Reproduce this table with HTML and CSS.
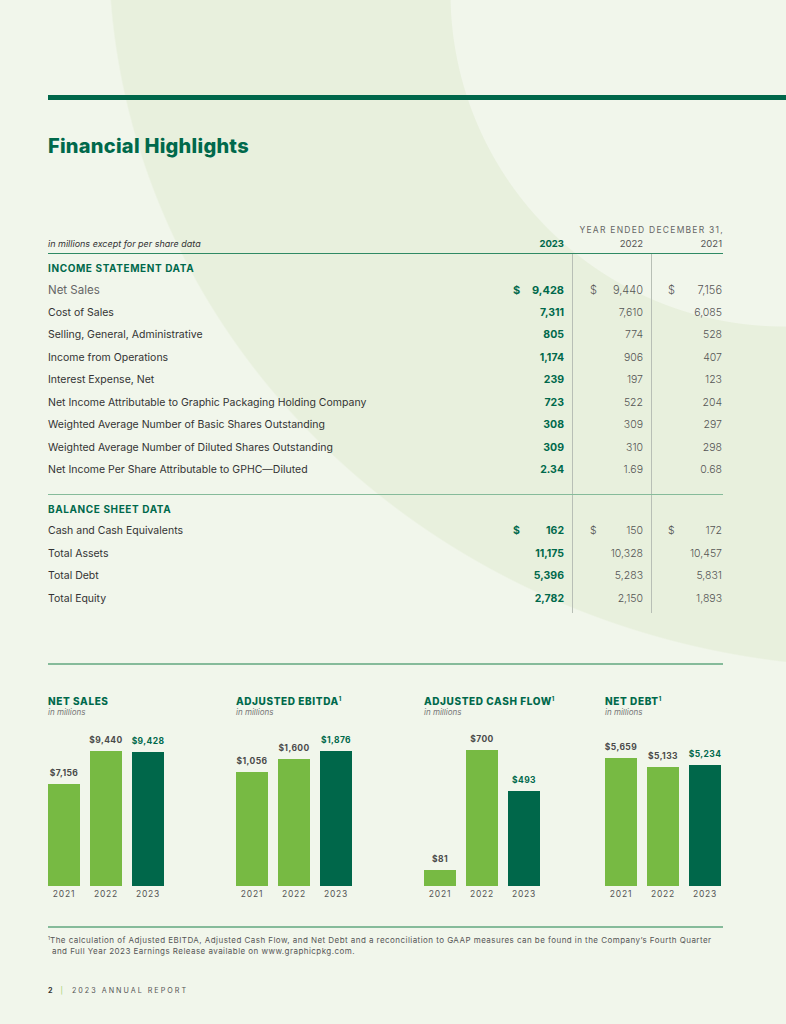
FILE: index.html
```html
<!DOCTYPE html>
<html>
<head>
<meta charset="utf-8">
<link rel="stylesheet" href="styles.css">
</head>
<body>
<div class="page">
  <div class="top-rule"></div>
  <h1 class="title">Financial Highlights</h1>

  <div class="fin">
    <div class="fin-caption">YEAR ENDED DECEMBER 31,</div>
    <div class="row fin-head">
      <div class="lbl note">in millions except for per share data</div>
      <div class="c1 hd hd23">2023</div>
      <div class="c2 hd">2022</div>
      <div class="c3 hd">2021</div>
    </div>
    <div class="fin-body">
      <div class="row"><div class="lbl sect">INCOME STATEMENT DATA</div></div>
      <div class="row first"><div class="lbl">Net Sales</div><div class="c1 v23"><span>$</span><span>9,428</span></div><div class="c2 vv"><span>$</span><span>9,440</span></div><div class="c3 vv"><span>$</span><span>7,156</span></div></div>
      <div class="row"><div class="lbl">Cost of Sales</div><div class="c1 v23"><span>7,311</span></div><div class="c2 vv"><span>7,610</span></div><div class="c3 vv"><span>6,085</span></div></div>
      <div class="row"><div class="lbl">Selling, General, Administrative</div><div class="c1 v23"><span>805</span></div><div class="c2 vv"><span>774</span></div><div class="c3 vv"><span>528</span></div></div>
      <div class="row"><div class="lbl">Income from Operations</div><div class="c1 v23"><span>1,174</span></div><div class="c2 vv"><span>906</span></div><div class="c3 vv"><span>407</span></div></div>
      <div class="row"><div class="lbl">Interest Expense, Net</div><div class="c1 v23"><span>239</span></div><div class="c2 vv"><span>197</span></div><div class="c3 vv"><span>123</span></div></div>
      <div class="row"><div class="lbl">Net Income Attributable to Graphic Packaging Holding Company</div><div class="c1 v23"><span>723</span></div><div class="c2 vv"><span>522</span></div><div class="c3 vv"><span>204</span></div></div>
      <div class="row"><div class="lbl">Weighted Average Number of Basic Shares Outstanding</div><div class="c1 v23"><span>308</span></div><div class="c2 vv"><span>309</span></div><div class="c3 vv"><span>297</span></div></div>
      <div class="row"><div class="lbl">Weighted Average Number of Diluted Shares Outstanding</div><div class="c1 v23"><span>309</span></div><div class="c2 vv"><span>310</span></div><div class="c3 vv"><span>298</span></div></div>
      <div class="row"><div class="lbl">Net Income Per Share Attributable to GPHC—Diluted</div><div class="c1 v23"><span>2.34</span></div><div class="c2 vv"><span>1.69</span></div><div class="c3 vv"><span>0.68</span></div></div>

      <div class="mid-rule"></div>

      <div class="row"><div class="lbl sect">BALANCE SHEET DATA</div></div>
      <div class="row"><div class="lbl">Cash and Cash Equivalents</div><div class="c1 v23"><span>$</span><span>162</span></div><div class="c2 vv"><span>$</span><span>150</span></div><div class="c3 vv"><span>$</span><span>172</span></div></div>
      <div class="row"><div class="lbl">Total Assets</div><div class="c1 v23"><span>11,175</span></div><div class="c2 vv"><span>10,328</span></div><div class="c3 vv"><span>10,457</span></div></div>
      <div class="row"><div class="lbl">Total Debt</div><div class="c1 v23"><span>5,396</span></div><div class="c2 vv"><span>5,283</span></div><div class="c3 vv"><span>5,831</span></div></div>
      <div class="row"><div class="lbl">Total Equity</div><div class="c1 v23"><span>2,782</span></div><div class="c2 vv"><span>2,150</span></div><div class="c3 vv"><span>1,893</span></div></div>
    </div>
  </div>

  <div class="charts-rule"></div>

  <div class="charts">
    <div class="chart">
      <div class="chart-title">NET SALES</div>
      <div class="chart-sub">in millions</div>
      <div class="bars">
        <div class="bar-col"><div class="val">$7,156</div><div class="bar light" style="height:102px"></div></div>
        <div class="bar-col"><div class="val">$9,440</div><div class="bar light" style="height:135px"></div></div>
        <div class="bar-col"><div class="val cur">$9,428</div><div class="bar dark" style="height:134px"></div></div>
      </div>
      <div class="years"><span>2021</span><span>2022</span><span>2023</span></div>
    </div>
    <div class="chart">
      <div class="chart-title">ADJUSTED EBITDA<sup>1</sup></div>
      <div class="chart-sub">in millions</div>
      <div class="bars">
        <div class="bar-col"><div class="val">$1,056</div><div class="bar light" style="height:114px"></div></div>
        <div class="bar-col"><div class="val">$1,600</div><div class="bar light" style="height:127px"></div></div>
        <div class="bar-col"><div class="val cur">$1,876</div><div class="bar dark" style="height:135px"></div></div>
      </div>
      <div class="years"><span>2021</span><span>2022</span><span>2023</span></div>
    </div>
    <div class="chart">
      <div class="chart-title">ADJUSTED CASH FLOW<sup>1</sup></div>
      <div class="chart-sub">in millions</div>
      <div class="bars">
        <div class="bar-col"><div class="val">$81</div><div class="bar light" style="height:16px"></div></div>
        <div class="bar-col"><div class="val">$700</div><div class="bar light" style="height:136px"></div></div>
        <div class="bar-col"><div class="val cur">$493</div><div class="bar dark" style="height:95px"></div></div>
      </div>
      <div class="years"><span>2021</span><span>2022</span><span>2023</span></div>
    </div>
    <div class="chart">
      <div class="chart-title">NET DEBT<sup>1</sup></div>
      <div class="chart-sub">in millions</div>
      <div class="bars">
        <div class="bar-col"><div class="val">$5,659</div><div class="bar light" style="height:128px"></div></div>
        <div class="bar-col"><div class="val">$5,133</div><div class="bar light" style="height:119px"></div></div>
        <div class="bar-col"><div class="val cur">$5,234</div><div class="bar dark" style="height:121px"></div></div>
      </div>
      <div class="years"><span>2021</span><span>2022</span><span>2023</span></div>
    </div>
  </div>

  <div class="foot-rule"></div>
  <p class="footnote"><sup>1</sup>The calculation of Adjusted EBITDA, Adjusted Cash Flow, and Net Debt and a reconciliation to GAAP measures can be found in the Company’s Fourth Quarter<br>and Full Year 2023 Earnings Release available on www.graphicpkg.com.</p>

  <div class="folio"><b>2</b><span class="bar-sep">|</span><span>2023 ANNUAL REPORT</span></div>
</div>
</body>
</html>
```

FILE: styles.css
```css
* { box-sizing: border-box; }
html, body { margin: 0; padding: 0; }
body {
  width: 786px;
  height: 1024px;
  overflow: hidden;
  font-family: "Inter", "Liberation Sans", sans-serif;
  color: #3a3a3a;
  background-color: #f1f6eb;
  background-image:
    radial-gradient(circle 334px at 784px -7px, #f1f6eb 99.7%, rgba(241,246,235,0) 100%),
    radial-gradient(772px 720px at 880px -52px, #e8f0dd 99.8%, rgba(232,240,221,0) 100%);
  background-repeat: no-repeat;
}
.page {
  padding: 95px 0 0 48px;
}
.top-rule {
  height: 5px;
  background: #00674a;
}
.title {
  margin: 34px 0 0;
  font-size: 20px;
  line-height: 24px;
  font-weight: 800;
  color: #00694b;
  letter-spacing: 0.25px;
}
.fin { width: 675px; margin-top: 66px; }
.fin-caption {
  text-align: right;
  font-size: 8.5px;
  line-height: 12px;
  letter-spacing: 1.25px;
  color: #666;
  margin-right: -1px;
}
.row {
  display: grid;
  grid-template-columns: 455px 69px 79px 72px;
  font-size: 10.5px;
  line-height: 22.5px;
  height: 22.5px;
}
.fin-head {
  margin-top: 2px;
  line-height: 12px;
  height: 16px;
  padding-bottom: 2.5px;
  border-bottom: 1.5px solid #2f8a64;
}
.note { font-style: italic; color: #777; font-size: 9px; }
.hd { text-align: right; font-size: 9.5px; color: #555; }
.hd23 { font-weight: 700; color: #00694b; }
.c1 { padding: 0 8px 0 10px; }
.c2 { padding: 0 8px 0 18px; }
.c3 { padding: 0 1px 0 17px; }
.v23, .vv { display: flex; justify-content: flex-end; }
.v23 span:first-child:not(:last-child), .vv span:first-child:not(:last-child) { margin-right: auto; }
.v23 { font-weight: 700; color: #00694b; }
.vv { color: #555; font-weight: 300; }
.lbl { color: #333; white-space: nowrap; }
.first .lbl { color: #666; font-size: 11.5px; }
.first .c1, .first .c2, .first .c3 { font-size: 11px; }
.sect { font-weight: 700; color: #00694b; letter-spacing: 0.6px; font-size: 10px; }
.fin-body {
  padding: 2.75px 0;
  background-image: linear-gradient(#b8bfb6, #b8bfb6), linear-gradient(#b8bfb6, #b8bfb6);
  background-size: 1px 100%, 1px 100%;
  background-position: 524px 0, 603px 0;
  background-repeat: no-repeat;
}
.mid-rule {
  height: 1.5px;
  background: #86bb9a;
  margin: 12px 0 2.5px;
}
.charts-rule {
  width: 675px;
  height: 1.5px;
  background: #86bb9a;
  margin-top: 50px;
}
.charts {
  display: grid;
  grid-template-columns: 188px 188px 181px 118px;
  width: 675px;
  margin-top: 30.5px;
}
.chart-title {
  font-size: 10px;
  line-height: 12px;
  font-weight: 800;
  color: #00694b;
  letter-spacing: 0.6px;
  white-space: nowrap;
}
.chart-title sup {
  font-size: 5.5px;
  vertical-align: 4px;
  line-height: 0;
  letter-spacing: 0;
}
.chart-sub {
  font-size: 8px;
  line-height: 10px;
  font-style: italic;
  color: #777;
}
.bars {
  height: 169px;
  display: flex;
  align-items: flex-end;
  gap: 10px;
}
.bar-col {
  width: 32px;
  display: flex;
  flex-direction: column;
  align-items: center;
}
.val {
  font-size: 8.5px;
  line-height: 12px;
  font-weight: 700;
  color: #4a4a4a;
  margin-bottom: 5px;
  white-space: nowrap;
  letter-spacing: 0.4px;
}
.val.cur { color: #00694b; }
.bar { width: 32px; }
.bar.light { background: #77ba43; }
.bar.dark { background: #00674a; }
.years {
  display: flex;
  gap: 10px;
  margin-top: 2px;
}
.years span {
  width: 32px;
  text-align: center;
  font-size: 8.5px;
  line-height: 12px;
  color: #555;
  letter-spacing: 0.8px;
}
.foot-rule {
  width: 675px;
  height: 1.5px;
  background: #86bb9a;
  margin-top: 26px;
}
.footnote {
  width: 690px;
  margin: 7px 0 0;
  font-size: 8px;
  line-height: 11px;
  color: #555;
  letter-spacing: 0.45px;
  padding-left: 4px;
  text-indent: -4px;
  white-space: nowrap;
}
.footnote sup {
  font-size: 5px;
  vertical-align: 3px;
  line-height: 0;
  letter-spacing: 0;
}
.folio {
  margin-top: 29px;
  font-size: 7.2px;
  line-height: 10px;
  color: #555;
  letter-spacing: 2px;
  display: flex;
  align-items: center;
}
.folio b { color: #333; font-weight: 700; }
.bar-sep { color: #9ccf6b; margin: 0 7px 0 6px; }
```
